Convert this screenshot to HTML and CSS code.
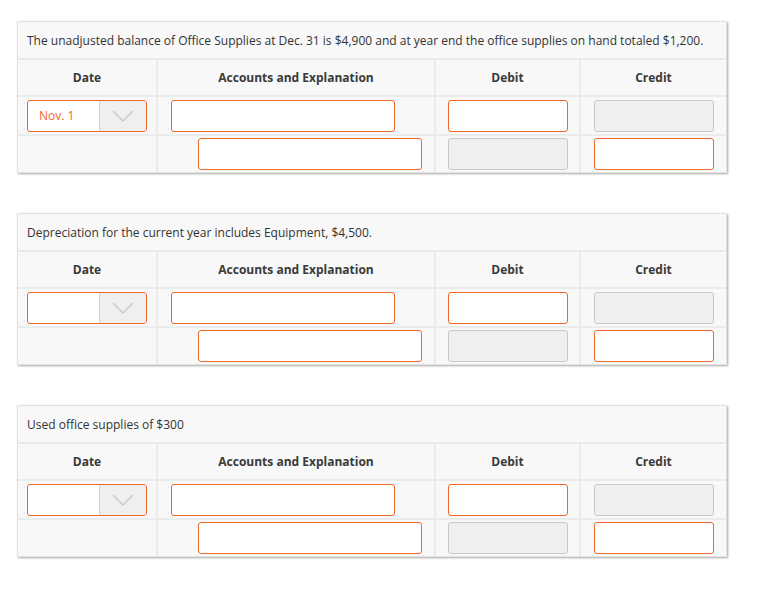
FILE: index.html
```html
<!DOCTYPE html>
<html lang="en">
<head>
    <meta charset="UTF-8">
    <meta name="viewport" content="width=device-width, initial-scale=1.0">
    <title>journal entries</title>
    <link rel="stylesheet" href="styles.css">
</head>
<body>
    <div class="entry">
        <div class="question">The unadjusted balance of Office Supplies at Dec. 31 is $4,900 and at year end the office supplies on hand totaled $1,200.</div>
        <div class="head">Date</div>
        <div class="head">Accounts and Explanation</div>
        <div class="head">Debit</div>
        <div class="head">Credit</div>

        <div class="cell center">
            <div class="select">
                <span class="select-value">Nov. 1</span>
                <span class="select-arrow"><svg width="22" height="12" viewBox="0 0 22 12"><polyline points="1,1 11,11 21,1" fill="none" stroke="#c9c9c9" stroke-width="1.4"/></svg></span>
            </div>
        </div>
        <div class="cell"><input class="field account" type="text"></div>
        <div class="cell center"><input class="field amount" type="text"></div>
        <div class="cell center"><input class="field amount" type="text" disabled></div>

        <div class="cell"></div>
        <div class="cell"><input class="field account indent" type="text"></div>
        <div class="cell center"><input class="field amount" type="text" disabled></div>
        <div class="cell center"><input class="field amount" type="text"></div>
    </div>

    <div class="entry">
        <div class="question">Depreciation for the current year includes Equipment, $4,500.</div>
        <div class="head">Date</div>
        <div class="head">Accounts and Explanation</div>
        <div class="head">Debit</div>
        <div class="head">Credit</div>

        <div class="cell center">
            <div class="select">
                <span class="select-value"></span>
                <span class="select-arrow"><svg width="22" height="12" viewBox="0 0 22 12"><polyline points="1,1 11,11 21,1" fill="none" stroke="#c9c9c9" stroke-width="1.4"/></svg></span>
            </div>
        </div>
        <div class="cell"><input class="field account" type="text"></div>
        <div class="cell center"><input class="field amount" type="text"></div>
        <div class="cell center"><input class="field amount" type="text" disabled></div>

        <div class="cell"></div>
        <div class="cell"><input class="field account indent" type="text"></div>
        <div class="cell center"><input class="field amount" type="text" disabled></div>
        <div class="cell center"><input class="field amount" type="text"></div>
    </div>

    <div class="entry">
        <div class="question">Used office supplies of $300</div>
        <div class="head">Date</div>
        <div class="head">Accounts and Explanation</div>
        <div class="head">Debit</div>
        <div class="head">Credit</div>

        <div class="cell center">
            <div class="select">
                <span class="select-value"></span>
                <span class="select-arrow"><svg width="22" height="12" viewBox="0 0 22 12"><polyline points="1,1 11,11 21,1" fill="none" stroke="#c9c9c9" stroke-width="1.4"/></svg></span>
            </div>
        </div>
        <div class="cell"><input class="field account" type="text"></div>
        <div class="cell center"><input class="field amount" type="text"></div>
        <div class="cell center"><input class="field amount" type="text" disabled></div>

        <div class="cell"></div>
        <div class="cell"><input class="field account indent" type="text"></div>
        <div class="cell center"><input class="field amount" type="text" disabled></div>
        <div class="cell center"><input class="field amount" type="text"></div>
    </div>
</body>
</html>
```

FILE: styles.css
```css
*{
   margin: 0;
   padding: 0;
   box-sizing: border-box;
}

body{
   font-family: "Open Sans", sans-serif;
   font-size: 12px;
   color: #333;
   background-color: white;
   padding: 21px 0 0 17px;
}

.entry{
   width: 710px;
   display: grid;
   grid-template-columns: 138px 276px 143px 145px;
   grid-template-rows: 36px 35px 37px 36px;
   gap: 2px;
   background-color: #ebebeb;
   border: 1px solid #e2e2e2;
   box-shadow: 1px 1px 2px rgba(0, 0, 0, 0.35);
   margin-bottom: 40px;
}

.question{
   grid-column: 1 / 5;
   background-color: #f8f8f8;
   display: flex;
   align-items: center;
   padding-left: 9px;
   font-size: 12px;
}

.head{
   background-color: #f8f8f8;
   display: flex;
   align-items: center;
   justify-content: center;
   font-weight: bold;
   font-size: 12px;
   color: #3a3a3a;
}

.cell{
   background-color: #f8f8f8;
   display: flex;
   align-items: center;
   padding-left: 13px;
}

.cell.center{
   justify-content: center;
   padding-left: 0;
}

.field{
   height: 32px;
   border: 1px solid #f0672a;
   border-radius: 3px;
   background-color: white;
   font-family: inherit;
}

.field:disabled{
   border-color: #c8c8c8;
   background-color: #efefef;
}

.account{
   width: 224px;
}

.account.indent{
   margin-left: 27px;
}

.amount{
   width: 120px;
}

.select{
   width: 120px;
   height: 32px;
   border: 1px solid #f0672a;
   border-radius: 3px;
   background-color: white;
   display: flex;
   overflow: hidden;
}

.select-value{
   width: 71px;
   padding-left: 11px;
   display: flex;
   align-items: center;
   color: #f0672a;
   font-size: 12px;
}

.select-arrow{
   flex: 1;
   background-color: #efefef;
   border-left: 1px solid #cfcfcf;
   display: flex;
   align-items: center;
   justify-content: center;
   padding-top: 1px;
}
```
